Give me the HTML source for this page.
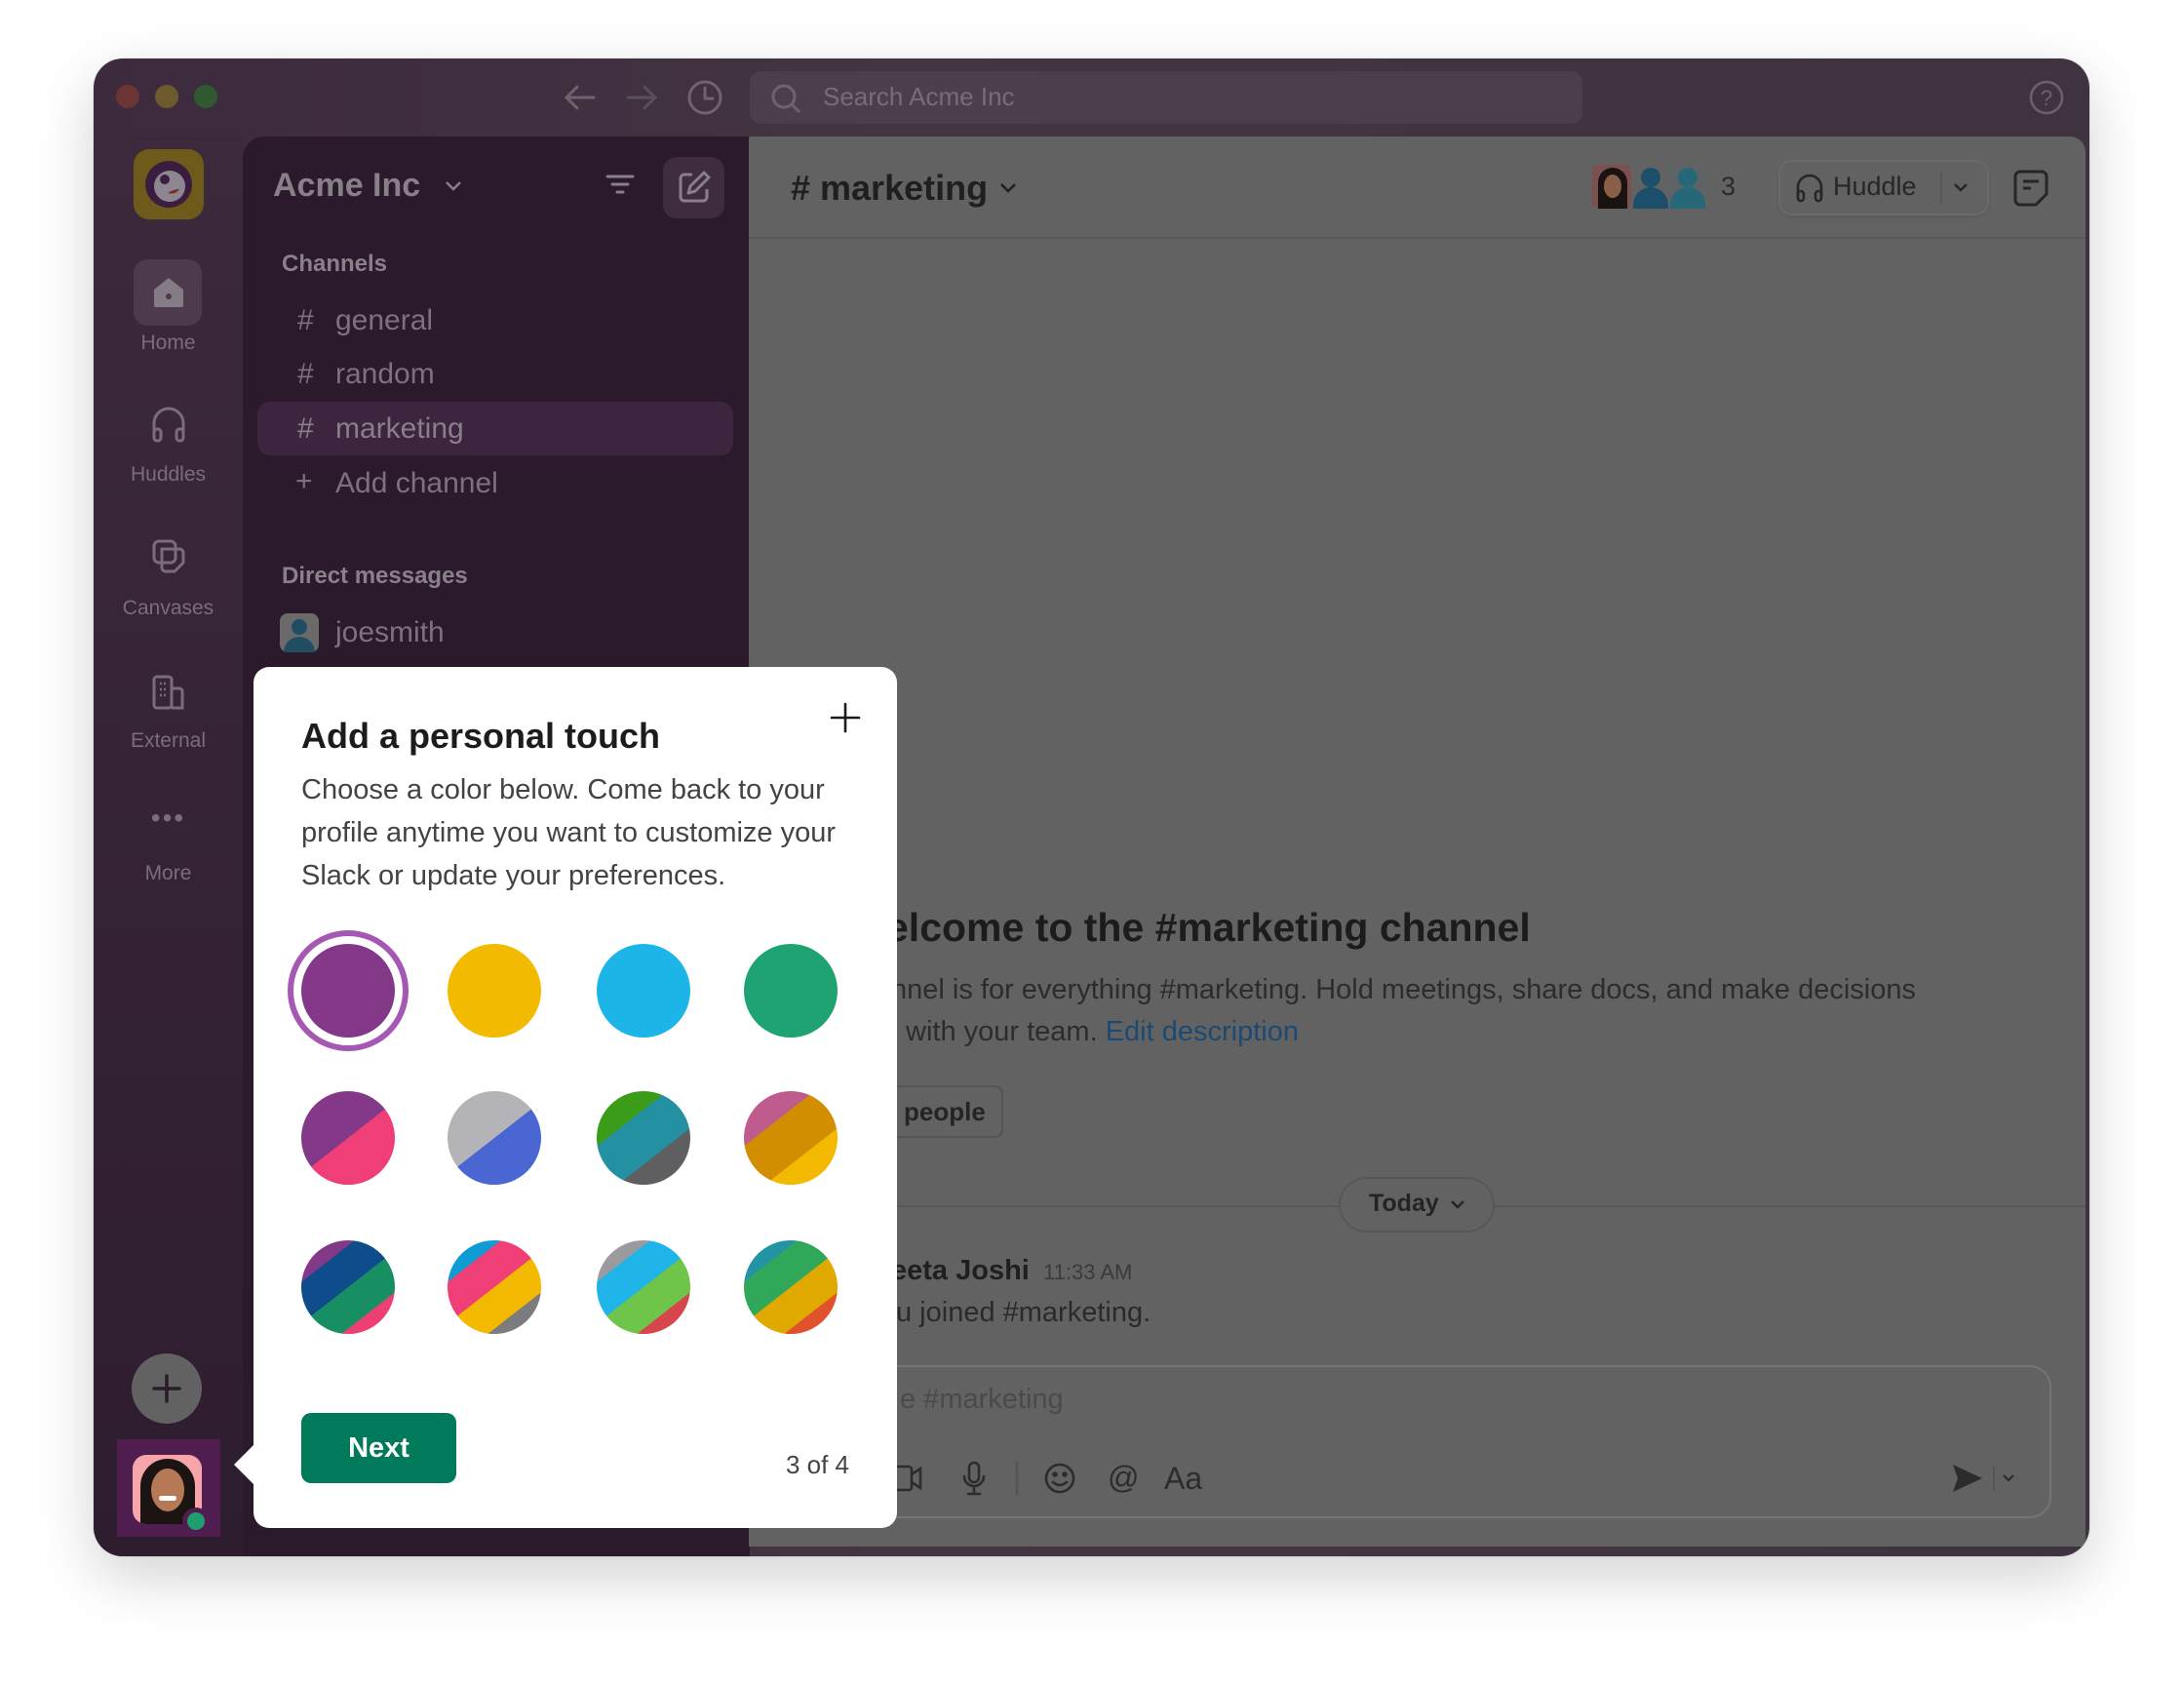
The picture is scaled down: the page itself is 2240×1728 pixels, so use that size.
<!DOCTYPE html>
<html><head><meta charset="utf-8"><style>
*{margin:0;padding:0;box-sizing:border-box}
body{width:2240px;height:1728px;background:#fff;position:relative;overflow:hidden;font-family:"Liberation Sans",sans-serif}
.a{position:absolute}
.win{left:96px;top:60px;width:2047px;height:1536px;border-radius:30px;background:linear-gradient(90deg,#3d2a3d,#433541 40%,#3f3340);box-shadow:0 20px 60px rgba(0,0,0,.18),0 0 0 1px rgba(0,0,0,.06);overflow:hidden}
.rail{left:0;top:80px;width:153px;height:1456px;background:linear-gradient(#3c2a3c,#2e1d2f)}
.side{left:153px;top:80px;width:520px;height:1456px;background:#2b1a2b;border-top-left-radius:22px}
.main{left:672px;top:80px;width:1371px;height:1446px;background:#626262;border-top-right-radius:16px;border-top-left-radius:2px;overflow:hidden}
.lbl{color:#7b6c7a;font-size:21px;text-align:center;width:153px;left:0}
.ch{color:#7e707d;font-size:30px}
.pop{left:260px;top:684px;width:660px;height:883px;background:#fff;border-radius:16px}
.c{position:absolute;width:96px;height:96px;border-radius:50%}
</style></head><body>
<div class="a win">
 <div class="a" style="left:23px;top:27px;width:24px;height:24px;border-radius:50%;background:#6b3535"></div>
 <div class="a" style="left:63px;top:27px;width:24px;height:24px;border-radius:50%;background:#6d5a2e"></div>
 <div class="a" style="left:103px;top:27px;width:24px;height:24px;border-radius:50%;background:#2f5a31"></div>
 <svg class="a" style="left:480px;top:20px" width="280" height="40" viewBox="0 0 280 40" fill="none" stroke="#6f636e" stroke-width="3" stroke-linecap="round" stroke-linejoin="round">
  <path d="M5 20h28M5 20l11-11M5 20l11 11"/>
  <path d="M68 20h28M96 20l-11-11M96 20l-11 11" stroke="#5a4e59"/>
  <circle cx="147" cy="20" r="16"/><path d="M147 10v11h8"/>
 </svg>
 <div class="a" style="left:673px;top:13px;width:854px;height:54px;border-radius:12px;background:#4c3f4b"></div>
 <svg class="a" style="left:693px;top:24px" width="34" height="34" viewBox="0 0 34 34" fill="none" stroke="#6e636d" stroke-width="3" stroke-linecap="round"><circle cx="15" cy="15" r="11"/><path d="M23 23l7 7"/></svg>
 <div class="a" style="left:748px;top:24px;font-size:26px;color:#786d77">Search Acme Inc</div>
 <svg class="a" style="left:1985px;top:22px" width="36" height="36" viewBox="0 0 36 36" fill="none" stroke="#6c606b" stroke-width="2.5"><circle cx="18" cy="18" r="16"/><text x="18" y="26" font-size="22" text-anchor="middle" fill="#6c606b" stroke="none" font-family="Liberation Sans">?</text></svg>

 <div class="a rail">
  <div class="a" style="left:41px;top:13px;width:72px;height:72px;border-radius:16px;background:#6e5a1a"></div>
  <svg class="a" style="left:50px;top:22px" width="54" height="54" viewBox="0 0 54 54"><circle cx="27" cy="27" r="24" fill="#3b1e3f"/><circle cx="28" cy="29" r="16" fill="#8c8690"/><circle cx="23" cy="22" r="5" fill="#3b1e3f"/><path d="M26 36q8 2 12-4q-6 0-12 4z" fill="#7a2a25"/></svg>
  <div class="a" style="left:41px;top:126px;width:70px;height:68px;border-radius:14px;background:#4d3a4c"></div>
  <svg class="a" style="left:58px;top:140px" width="38" height="38" viewBox="0 0 38 38"><path d="M4 17L19 5l15 12v16a2 2 0 0 1-2 2H6a2 2 0 0 1-2-2z" fill="#857b84"/><circle cx="19" cy="24" r="3" fill="#4d3a4c"/></svg>
  <div class="a lbl" style="top:200px">Home</div>
  <svg class="a" style="left:58px;top:274px" width="38" height="44" viewBox="0 0 38 44" fill="none" stroke="#7b6c7a" stroke-width="3"><path d="M4 32V20a15 15 0 0 1 30 0v12"/><rect x="4" y="26" width="7" height="12" rx="3"/><rect x="27" y="26" width="7" height="12" rx="3"/></svg>
  <div class="a lbl" style="top:335px">Huddles</div>
  <svg class="a" style="left:58px;top:411px" width="38" height="40" viewBox="0 0 38 40" fill="none" stroke="#7b6c7a" stroke-width="3"><rect x="4" y="4" width="22" height="22" rx="5"/><path d="M12 12h18a4 4 0 0 1 4 4v10l-9 9H16a4 4 0 0 1-4-4z"/></svg>
  <div class="a lbl" style="top:472px">Canvases</div>
  <svg class="a" style="left:58px;top:550px" width="38" height="40" viewBox="0 0 38 40" fill="none" stroke="#7b6c7a" stroke-width="3"><rect x="4" y="4" width="18" height="32" rx="3"/><path d="M22 16h8a3 3 0 0 1 3 3v17H22"/><path d="M10 11h2M14 11h2M10 17h2M14 17h2M10 23h2M14 23h2" stroke-width="2.5"/></svg>
  <div class="a lbl" style="top:608px">External</div>
  <div class="a" style="left:0;width:153px;top:683px;text-align:center;color:#7b6c7a;font-size:28px;letter-spacing:2px">•••</div>
  <div class="a lbl" style="top:744px">More</div>
  <div class="a" style="left:39px;top:1248px;width:72px;height:72px;border-radius:50%;background:#626262"></div>
  <svg class="a" style="left:57px;top:1266px" width="36" height="36" viewBox="0 0 36 36" stroke="#2b1a2b" stroke-width="3.5" stroke-linecap="round"><path d="M18 5v26M5 18h26"/></svg>
  <div class="a" style="left:24px;top:1336px;width:106px;height:100px;background:#4f1d50"></div>
  <div class="a" style="left:40px;top:1352px;width:71px;height:71px;border-radius:14px;background:#f6a5ab;overflow:hidden">
   <div class="a" style="left:8px;top:4px;width:56px;height:80px;border-radius:28px 28px 0 0;background:#1c1412"></div>
   <div class="a" style="left:19px;top:14px;width:34px;height:44px;border-radius:50%;background:#b57a55"></div>
   <div class="a" style="left:27px;top:42px;width:18px;height:5px;border-radius:3px;background:#fff"></div>
  </div>
  <div class="a" style="left:91px;top:1406px;width:28px;height:28px;border-radius:50%;background:#4f1d50"></div>
  <div class="a" style="left:96px;top:1411px;width:18px;height:18px;border-radius:50%;background:#1f9e6f"></div>
 </div>

 <div class="a side">
  <div class="a" style="left:31px;top:31px;font-size:34px;font-weight:bold;color:#897f88">Acme Inc</div>
  <svg class="a" style="left:206px;top:44px" width="20" height="14" viewBox="0 0 20 14" fill="none" stroke="#897f88" stroke-width="2.5"><path d="M3 3l7 7 7-7"/></svg>
  <svg class="a" style="left:371px;top:37px" width="32" height="26" viewBox="0 0 32 26" stroke="#897f88" stroke-width="3" stroke-linecap="round"><path d="M3 4h26M8 12h16M13 20h6"/></svg>
  <div class="a" style="left:431px;top:21px;width:63px;height:63px;border-radius:14px;background:#3f2d3f"></div>
  <svg class="a" style="left:445px;top:34px" width="36" height="36" viewBox="0 0 36 36" fill="none" stroke="#897f88" stroke-width="3" stroke-linejoin="round"><path d="M16 5H8a4 4 0 0 0-4 4v19a4 4 0 0 0 4 4h19a4 4 0 0 0 4-4v-8"/><path d="M28 3l5 5-14 14-7 2 2-7z"/></svg>
  <div class="a" style="left:40px;top:117px;font-size:24px;font-weight:bold;color:#8a808a">Channels</div>
  <div class="a ch" style="left:56px;top:172px">#</div><div class="a ch" style="left:95px;top:172px">general</div>
  <div class="a ch" style="left:56px;top:227px">#</div><div class="a ch" style="left:95px;top:227px">random</div>
  <div class="a" style="left:15px;top:272px;width:488px;height:55px;border-radius:13px;background:#3d2540"></div>
  <div class="a ch" style="left:56px;top:283px;color:#8a7f89">#</div><div class="a ch" style="left:95px;top:283px;color:#8a7f89">marketing</div>
  <div class="a ch" style="left:54px;top:337px">+</div><div class="a ch" style="left:95px;top:339px">Add channel</div>
  <div class="a" style="left:40px;top:437px;font-size:24px;font-weight:bold;color:#8a808a">Direct messages</div>
  <div class="a" style="left:38px;top:489px;width:40px;height:40px;border-radius:8px;background:#6a6a6a;overflow:hidden"><div class="a" style="left:12px;top:6px;width:16px;height:16px;border-radius:50%;background:#214d63"></div><div class="a" style="left:4px;top:24px;width:32px;height:24px;border-radius:16px 16px 0 0;background:#214d63"></div></div>
  <div class="a ch" style="left:95px;top:492px">joesmith</div>
 </div>

 <div class="a main">
  <div class="a" style="left:43px;top:32px;font-size:36px;font-weight:bold;color:#1f1f1f">#&nbsp;marketing</div>
  <svg class="a" style="left:256px;top:46px" width="20" height="14" viewBox="0 0 20 14" fill="none" stroke="#1f1f1f" stroke-width="2.5"><path d="M3 3l7 7 7-7"/></svg>
  <div class="a" style="left:0;top:103px;width:1371px;height:2px;background:#585858"></div>
  <div class="a" style="left:865px;top:29px;width:40px;height:45px;border-radius:6px;background:#7d5050;overflow:hidden"><div class="a" style="left:6px;top:3px;width:30px;height:46px;border-radius:15px 15px 0 0;background:#1b1312"></div><div class="a" style="left:12px;top:10px;width:18px;height:24px;border-radius:50%;background:#8a5f47"></div></div>
  <div class="a" style="left:907px;top:29px;width:36px;height:45px"><div class="a" style="left:8px;top:3px;width:20px;height:20px;border-radius:50%;background:#1d4f6a"></div><div class="a" style="left:0;top:23px;width:36px;height:22px;border-radius:18px 18px 0 0;background:#1d4f6a"></div></div>
  <div class="a" style="left:945px;top:29px;width:36px;height:45px;background:#5e6466"><div class="a" style="left:8px;top:3px;width:20px;height:20px;border-radius:50%;background:#266877"></div><div class="a" style="left:0;top:23px;width:36px;height:22px;border-radius:18px 18px 0 0;background:#266877"></div></div>
  <div class="a" style="left:997px;top:36px;font-size:27px;color:#2a2a2a">3</div>
  <div class="a" style="left:1056px;top:24px;width:216px;height:57px;border-radius:14px;border:2px solid #6a6a6a;box-shadow:0 2px 4px rgba(0,0,0,.08)"></div>
  <svg class="a" style="left:1073px;top:37px" width="30" height="32" viewBox="0 0 30 32" fill="none" stroke="#262626" stroke-width="2.6"><path d="M3 24V15a12 12 0 0 1 24 0v9"/><rect x="3" y="19" width="6" height="10" rx="3"/><rect x="21" y="19" width="6" height="10" rx="3"/></svg>
  <div class="a" style="left:1112px;top:36px;font-size:27px;color:#262626">Huddle</div>
  <div class="a" style="left:1222px;top:37px;width:2px;height:32px;background:#575757"></div>
  <svg class="a" style="left:1234px;top:46px" width="18" height="14" viewBox="0 0 18 14" fill="none" stroke="#262626" stroke-width="2.5"><path d="M3 3l6 6 6-6"/></svg>
  <svg class="a" style="left:1296px;top:33px" width="38" height="40" viewBox="0 0 38 40" fill="none" stroke="#262626" stroke-width="3" stroke-linejoin="round"><path d="M8 3h22a5 5 0 0 1 5 5v18l-11 11H8a5 5 0 0 1-5-5V8a5 5 0 0 1 5-5z"/><path d="M11 13h16M11 20h8"/></svg>

  <div class="a" style="left:141px;top:788px;font-size:41px;font-weight:bold;color:#1c1c1c;white-space:nowrap">elcome to the #marketing channel</div>
  <div class="a" style="left:146px;top:859px;font-size:29px;color:#2c2c2c;white-space:nowrap">nnel is for everything #marketing. Hold meetings, share docs, and make decisions</div>
  <div class="a" style="left:161px;top:902px;font-size:29px;color:#2c2c2c;white-space:nowrap">with your team. <span style="color:#1c4a72">Edit description</span></div>
  <div class="a" style="left:100px;top:973px;width:161px;height:54px;border:2px solid #545454;border-radius:9px"></div>
  <div class="a" style="left:159px;top:985px;font-size:26px;font-weight:bold;color:#242424">people</div>
  <div class="a" style="left:0;top:1096px;width:1371px;height:2px;background:#575757"></div>
  <div class="a" style="left:605px;top:1067px;width:160px;height:57px;border:2px solid #575757;border-radius:29px;background:#626262"></div>
  <div class="a" style="left:636px;top:1080px;font-size:25px;font-weight:bold;color:#242424">Today</div>
  <svg class="a" style="left:718px;top:1089px" width="18" height="14" viewBox="0 0 18 14" fill="none" stroke="#242424" stroke-width="2.5"><path d="M3 3l6 6 6-6"/></svg>
  <div class="a" style="left:146px;top:1147px;font-size:29px;font-weight:bold;color:#1f1f1f;white-space:nowrap">eeta Joshi <span style="font-size:22px;font-weight:normal;color:#3a3a3a">&nbsp;11:33 AM</span></div>
  <div class="a" style="left:151px;top:1190px;font-size:29px;color:#2a2a2a">u joined #marketing.</div>
  <div class="a" style="left:-20px;top:1260px;width:1356px;height:157px;border:2px solid #757575;border-radius:22px"></div>
  <div class="a" style="left:155px;top:1279px;font-size:29px;color:#4a4a4a">e #marketing</div>
  <svg class="a" style="left:146px;top:1356px" width="600" height="40" viewBox="0 0 600 40" fill="none" stroke="#2c2c2c" stroke-width="2.6" stroke-linecap="round">
   <path d="M0 8h18a3 3 0 0 1 3 3v18a3 3 0 0 1-3 3H0M21 16l9-6v20l-9-6"/>
   <rect x="80" y="4" width="10" height="20" rx="5"/><path d="M75 18a10 10 0 0 0 20 0M85 28v8M79 36h12"/>
   <path d="M129 4v32" stroke="#555"/>
   <circle cx="173" cy="20" r="14"/><circle cx="168" cy="16" r="1.5" fill="#2c2c2c"/><circle cx="178" cy="16" r="1.5" fill="#2c2c2c"/><path d="M166 24q7 6 14 0"/>
  </svg>
  <div class="a" style="left:368px;top:1357px;font-size:32px;color:#2c2c2c">@</div>
  <div class="a" style="left:426px;top:1358px;font-size:32px;color:#2c2c2c">Aa</div>
  <svg class="a" style="left:1233px;top:1359px" width="70" height="34" viewBox="0 0 70 34"><path d="M2 3l30 14L2 31l5-14z" fill="#2c2c2c"/><path d="M44 4v26" stroke="#555" stroke-width="2"/><path d="M54 14l5 5 5-5" fill="none" stroke="#2c2c2c" stroke-width="2.2"/></svg>
 </div>
</div>

<div class="a" style="left:240px;top:1480px;width:0;height:0;border-top:22px solid transparent;border-bottom:22px solid transparent;border-right:22px solid #fff"></div>
<div class="a pop">
 <svg class="a" style="left:591px;top:36px" width="32" height="32" viewBox="0 0 32 32" stroke="#1d1c1d" stroke-width="2.6" stroke-linecap="round"><path d="M16 2v28M2 16h28"/></svg>
 <div class="a" style="left:49px;top:50px;font-size:36px;font-weight:bold;color:#1d1c1d">Add a personal touch</div>
 <div class="a" style="left:49px;top:104px;width:600px;font-size:29px;line-height:44px;color:#454245">Choose a color below. Come back to your profile anytime you want to customize your Slack or update your preferences.</div>
 <div class="c" style="left:35px;top:270px;width:124px;height:124px;border:6px solid #a557b4"></div>
 <div class="c" style="left:49px;top:284px;background:#833987"></div>
 <div class="c" style="left:199px;top:284px;background:#f2ba00"></div>
 <div class="c" style="left:352px;top:284px;background:#1db5e8"></div>
 <div class="c" style="left:503px;top:284px;background:#20a372"></div>
 <div class="c" style="left:49px;top:435px;background:linear-gradient(142deg,#833987 50%,#ef3f76 50%)"></div>
 <div class="c" style="left:199px;top:435px;background:linear-gradient(142deg,#b4b4b8 50%,#4a66d3 50%)"></div>
 <div class="c" style="left:352px;top:435px;background:linear-gradient(142deg,#3b9c1a 33%,#2491a3 33% 66%,#5f5f61 66%)"></div>
 <div class="c" style="left:503px;top:435px;background:linear-gradient(142deg,#c05b8e 33%,#d38d00 33% 66%,#f2b900 66%)"></div>
 <div class="c" style="left:49px;top:588px;background:linear-gradient(142deg,#833987 25%,#0e4c8b 25% 50%,#178f62 50% 75%,#ee3f75 75%)"></div>
 <div class="c" style="left:199px;top:588px;background:linear-gradient(142deg,#0f9bd3 25%,#ef3f76 25% 50%,#f2b900 50% 75%,#7c7b7e 75%)"></div>
 <div class="c" style="left:352px;top:588px;background:linear-gradient(142deg,#9b9a9e 25%,#1fb5e8 25% 50%,#6fc44a 50% 75%,#d7464d 75%)"></div>
 <div class="c" style="left:503px;top:588px;background:linear-gradient(142deg,#2493a3 25%,#31a75a 25% 50%,#dfa900 50% 75%,#df522c 75%)"></div>
 <div class="a" style="left:49px;top:765px;width:159px;height:72px;border-radius:10px;background:#007a5a;color:#fff;font-size:29px;font-weight:bold;text-align:center;line-height:72px">Next</div>
 <div class="a" style="right:49px;top:803px;font-size:26px;color:#454245">3 of 4</div>
</div>
</body></html>
